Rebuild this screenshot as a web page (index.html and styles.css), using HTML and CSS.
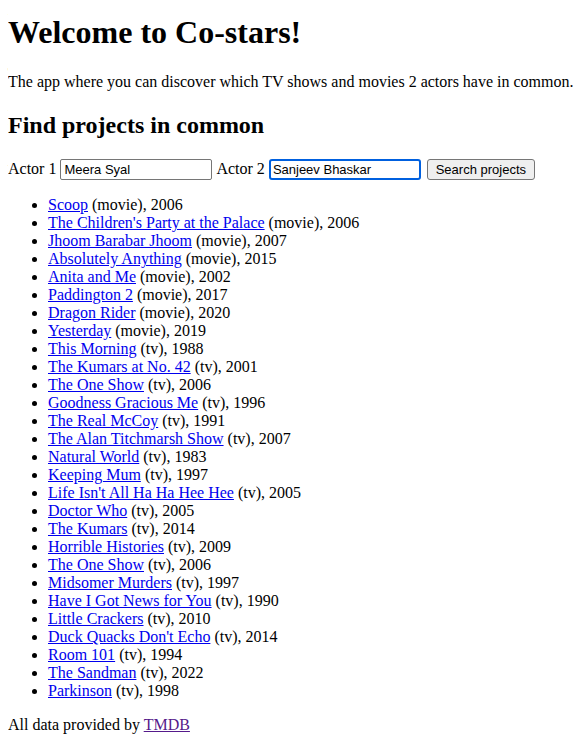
FILE: index.html
```html
<!DOCTYPE html>
<html>
<head>
<meta charset="utf-8">
<title>Co-stars</title>
<link rel="stylesheet" href="styles.css">
</head>
<body class="page">
<h1 class="title">Welcome to Co-stars!</h1>
<p class="intro">The app where you can discover which TV shows and movies 2 actors have in common.</p>
<h2 class="subtitle">Find projects in common</h2>
<form class="search">
<label class="field">Actor 1 <input class="actor-input" type="text" value="Meera Syal"></label>
<label class="field">Actor 2 <input class="actor-input focused" type="text" value="Sanjeev Bhaskar"></label>
<button class="search-btn" type="button">Search projects</button>
</form>
<ul class="results">
<li><a class="link" href="#">Scoop</a> (movie), 2006</li>
<li><a class="link" href="#">The Children's Party at the Palace</a> (movie), 2006</li>
<li><a class="link" href="#">Jhoom Barabar Jhoom</a> (movie), 2007</li>
<li><a class="link" href="#">Absolutely Anything</a> (movie), 2015</li>
<li><a class="link" href="#">Anita and Me</a> (movie), 2002</li>
<li><a class="link" href="#">Paddington 2</a> (movie), 2017</li>
<li><a class="link" href="#">Dragon Rider</a> (movie), 2020</li>
<li><a class="link" href="#">Yesterday</a> (movie), 2019</li>
<li><a class="link" href="#">This Morning</a> (tv), 1988</li>
<li><a class="link" href="#">The Kumars at No. 42</a> (tv), 2001</li>
<li><a class="link" href="#">The One Show</a> (tv), 2006</li>
<li><a class="link" href="#">Goodness Gracious Me</a> (tv), 1996</li>
<li><a class="link" href="#">The Real McCoy</a> (tv), 1991</li>
<li><a class="link" href="#">The Alan Titchmarsh Show</a> (tv), 2007</li>
<li><a class="link" href="#">Natural World</a> (tv), 1983</li>
<li><a class="link" href="#">Keeping Mum</a> (tv), 1997</li>
<li><a class="link" href="#">Life Isn't All Ha Ha Hee Hee</a> (tv), 2005</li>
<li><a class="link" href="#">Doctor Who</a> (tv), 2005</li>
<li><a class="link" href="#">The Kumars</a> (tv), 2014</li>
<li><a class="link" href="#">Horrible Histories</a> (tv), 2009</li>
<li><a class="link" href="#">The One Show</a> (tv), 2006</li>
<li><a class="link" href="#">Midsomer Murders</a> (tv), 1997</li>
<li><a class="link" href="#">Have I Got News for You</a> (tv), 1990</li>
<li><a class="link" href="#">Little Crackers</a> (tv), 2010</li>
<li><a class="link" href="#">Duck Quacks Don't Echo</a> (tv), 2014</li>
<li><a class="link" href="#">Room 101</a> (tv), 1994</li>
<li><a class="link" href="#">The Sandman</a> (tv), 2022</li>
<li><a class="link" href="#">Parkinson</a> (tv), 1998</li>
</ul>
<p class="credit">All data provided by <a class="link visited" href="#">TMDB</a></p>
</body>
</html>
```
FILE: styles.css
```css
.page {
  margin: 8px;
  font-family: "Liberation Serif", "Times New Roman", serif;
  font-size: 16px;
  line-height: 18px;
  color: #000;
  background: #fff;
}
.title {
  font-size: 32px;
  line-height: 32px;
  margin: 8px 0 25px;
  font-weight: bold;
}
.intro {
  margin: 16px 0;
}
.subtitle {
  font-size: 24px;
  line-height: 28px;
  margin: 20px 0 19px;
  font-weight: bold;
}
.search {
  margin: 0;
  display: flex;
  align-items: center;
  height: 22px;
}
.field {
  display: inline-flex;
  align-items: center;
  white-space: pre;
  margin-right: 4px;
}
.actor-input {
  box-sizing: border-box;
  width: 152px;
  height: 21px;
  margin: 0;
  padding: 1px 3px;
  font-family: "Liberation Sans", Arial, sans-serif;
  font-size: 13px;
  color: #000;
  border: 1px solid #767676;
  border-radius: 2px;
  background: #fff;
  outline: none;
}
.actor-input.focused {
  border: 2px solid #0060df;
  border-radius: 3px;
  padding: 0 2px;
}
.search-btn {
  box-sizing: border-box;
  width: 108px;
  height: 21px;
  margin: 0 0 0 2px;
  padding: 0 6px;
  font-family: "Liberation Sans", Arial, sans-serif;
  font-size: 13px;
  color: #000;
  background: #efefef;
  border: 1px solid #767676;
  border-radius: 3px;
}
.results {
  margin: 16px 0;
  padding-left: 40px;
}
.link {
  color: #0000ee;
  text-decoration: underline;
}
.link.visited {
  color: #551a8b;
}
.credit {
  margin: 16px 0;
}
```
